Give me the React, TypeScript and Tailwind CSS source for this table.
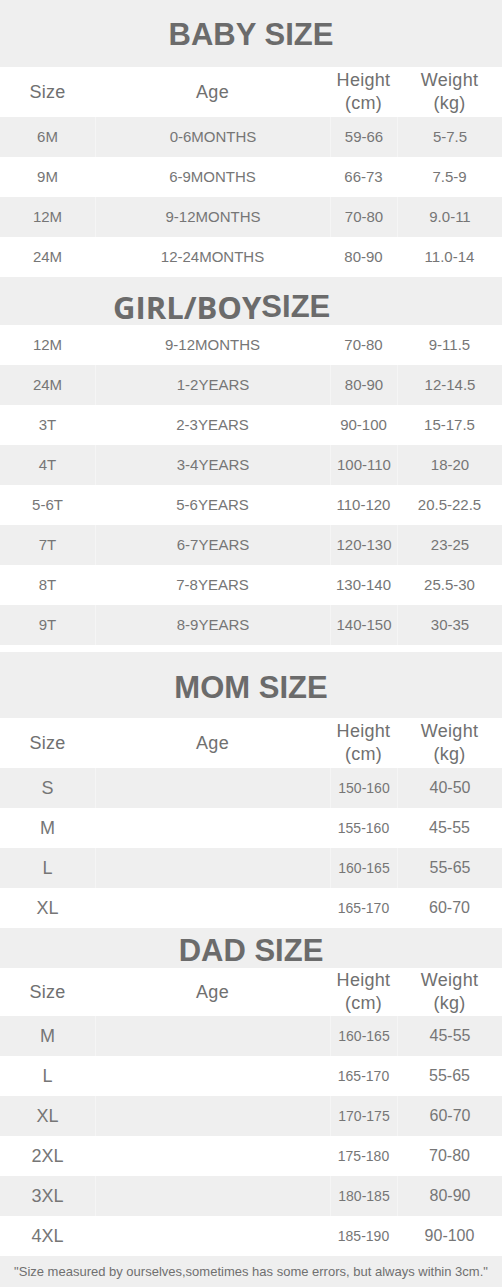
import React from 'react';

type Row = [string, string, string, string];

const baby: Row[] = [
  ['6M', '0-6MONTHS', '59-66', '5-7.5'],
  ['9M', '6-9MONTHS', '66-73', '7.5-9'],
  ['12M', '9-12MONTHS', '70-80', '9.0-11'],
  ['24M', '12-24MONTHS', '80-90', '11.0-14'],
];

const kids: Row[] = [
  ['12M', '9-12MONTHS', '70-80', '9-11.5'],
  ['24M', '1-2YEARS', '80-90', '12-14.5'],
  ['3T', '2-3YEARS', '90-100', '15-17.5'],
  ['4T', '3-4YEARS', '100-110', '18-20'],
  ['5-6T', '5-6YEARS', '110-120', '20.5-22.5'],
  ['7T', '6-7YEARS', '120-130', '23-25'],
  ['8T', '7-8YEARS', '130-140', '25.5-30'],
  ['9T', '8-9YEARS', '140-150', '30-35'],
];

const mom: Row[] = [
  ['S', '', '150-160', '40-50'],
  ['M', '', '155-160', '45-55'],
  ['L', '', '160-165', '55-65'],
  ['XL', '', '165-170', '60-70'],
];

const dad: Row[] = [
  ['M', '', '160-165', '45-55'],
  ['L', '', '165-170', '55-65'],
  ['XL', '', '170-175', '60-70'],
  ['2XL', '', '175-180', '70-80'],
  ['3XL', '', '180-185', '80-90'],
  ['4XL', '', '185-190', '90-100'],
];

const cols = 'grid grid-cols-[95px_235px_67px_105px]';

const Header = ({ h }: { h: string }) => (
  <div className={`${cols} ${h} items-center bg-white text-[18px] tracking-[0.3px] text-[#707070]`}>
    <div className="text-center">Size</div>
    <div className="text-center">Age</div>
    <div className="text-center leading-[23px]">Height<br />(cm)</div>
    <div className="text-center leading-[23px]">Weight<br />(kg)</div>
  </div>
);

// grey stripes carry faint light seams at the column edges
const Rows = ({ rows, firstGrey, adult }: { rows: Row[]; firstGrey: boolean; adult?: boolean }) => (
  <>
    {rows.map((r, i) => {
      const grey = (i % 2 === 0) === firstGrey;
      const seam = grey ? 'border-l border-[#f5f5f5]' : '';
      return (
        <div
          key={r[0] + i}
          className={`${cols} h-10 items-center text-[#767676] ${grey ? 'bg-[#efefef]' : 'bg-white'}`}
        >
          <div className={`text-center ${adult ? 'text-[18px]' : 'text-[15px]'}`}>{r[0]}</div>
          <div className={`h-full flex items-center justify-center text-[15px] ${seam}`}>{r[1]}</div>
          <div className={`h-full flex items-center justify-center ${adult ? 'text-[14px]' : 'text-[15px]'} ${seam}`}>{r[2]}</div>
          <div className={`h-full flex items-center justify-center ${adult ? 'text-[16px]' : 'text-[15px]'} ${seam}`}>{r[3]}</div>
        </div>
      );
    })}
  </>
);

const Title = ({ children, h }: { children: React.ReactNode; h: string }) => (
  <div className={`${h} flex items-center justify-center bg-[#efefef] text-[31px] font-bold text-[#6b6b6b]`}>
    {children}
  </div>
);

export default function App() {
  return (
    <div className="w-[502px] bg-white font-['Liberation_Sans',Arial,sans-serif]">
      <Title h="h-[67px] pt-1">BABY SIZE</Title>
      <Header h="h-[50px]" />
      <Rows rows={baby} firstGrey />

      <div className="h-12 flex items-center bg-[#efefef] pl-[113px] pt-3 text-[31px] font-bold text-[#6b6b6b]">
        <span className="font-['Open_Sans',sans-serif]">GIRL/BOY</span>
        <span>SIZE</span>
      </div>
      <Rows rows={kids} firstGrey={false} />

      <div className="h-[7px] bg-white" />
      <Title h="h-[66px] pt-1.5">MOM SIZE</Title>
      <Header h="h-[50px]" />
      <Rows rows={mom} firstGrey adult />

      <Title h="h-10 pt-1.5">DAD SIZE</Title>
      <Header h="h-12" />
      <Rows rows={dad} firstGrey adult />

      <div className="h-[31px] flex items-center justify-center bg-[#efefef] text-[13px] text-[#707070]">
        "Size measured by ourselves,sometimes has some errors, but always within 3cm."
      </div>
    </div>
  );
}
